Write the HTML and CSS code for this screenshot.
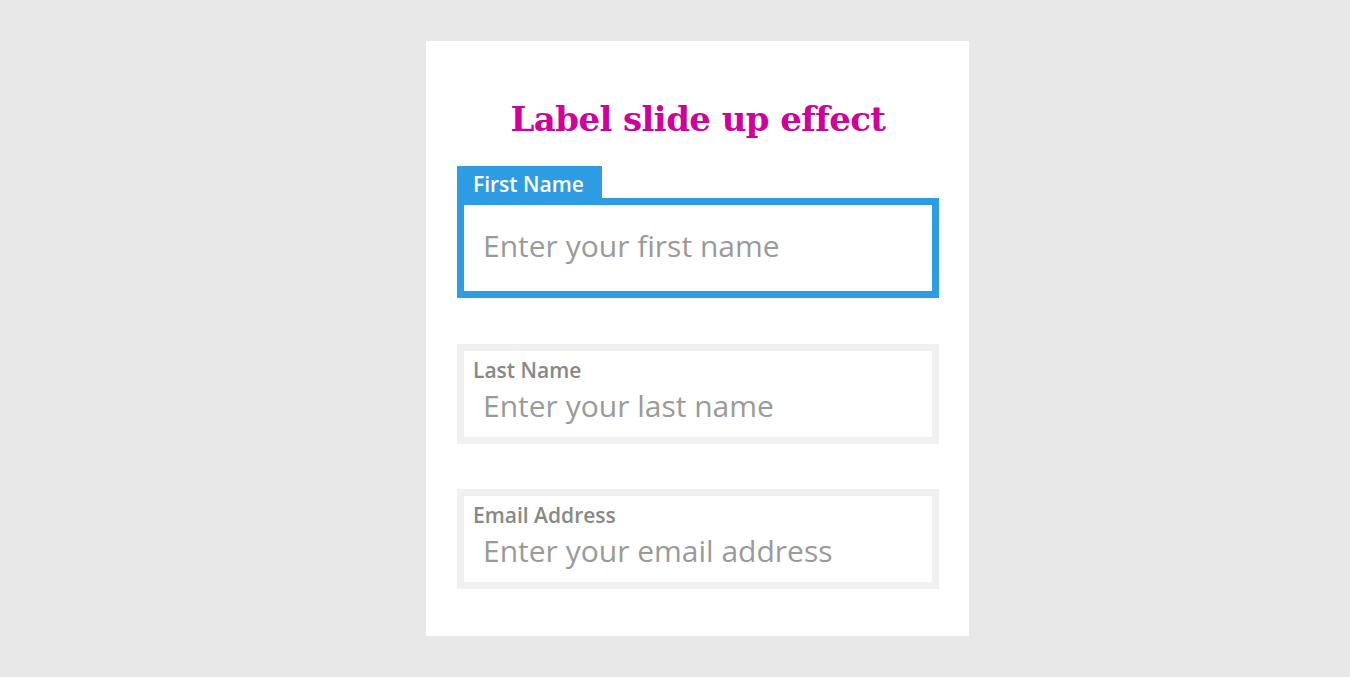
FILE: index.html
```html
<!DOCTYPE html>
<html lang="en">
<head>
<meta charset="utf-8">
<title>Label slide up effect</title>
<link rel="stylesheet" href="styles.css">
</head>
<body>
<main class="card">
  <h1 class="title">Label slide up effect</h1>
  <form class="form">
    <div class="field is-focused">
      <label class="tab" for="first">First Name</label>
      <div class="box">
        <input class="input" id="first" type="text" placeholder="Enter your first name">
      </div>
    </div>
    <div class="field">
      <div class="box">
        <label class="inline-label" for="last">Last Name</label>
        <input class="input" id="last" type="text" placeholder="Enter your last name">
      </div>
    </div>
    <div class="field">
      <div class="box">
        <label class="inline-label" for="email">Email Address</label>
        <input class="input" id="email" type="email" placeholder="Enter your email address">
      </div>
    </div>
  </form>
</main>
</body>
</html>
```

FILE: styles.css
```css
* { box-sizing: border-box; }

html, body {
  margin: 0;
  padding: 0;
}

body {
  background: #e8e8e8;
  font-family: "Open Sans", "Noto Sans", sans-serif;
  display: flex;
  justify-content: center;
  padding-top: 41px;
  padding-left: 45px;
}

.card {
  width: 543px;
  height: 595px;
  background: #ffffff;
  padding: 58px 30px 0 31px;
}

.title {
  margin: 0;
  text-align: center;
  font-family: "DejaVu Serif", "Liberation Serif", serif;
  font-weight: bold;
  font-size: 34px;
  letter-spacing: -0.6px;
  line-height: 40px;
  color: #d0009a;
}

.form {
  margin-top: 27px;
}

.field + .field {
  margin-top: 45.5px;
}

.tab {
  display: inline-block;
  height: 32px;
  padding: 4px 18px 0 16px;
  line-height: 28px;
  font-size: 21px;
  font-weight: 600;
  color: #ffffff;
  background: #2e9ce3;
  vertical-align: top;
}

.box {
  height: 100px;
  border: 7px solid #f0f0f0;
  background: #ffffff;
}

.is-focused .box {
  border-color: #2e9ce3;
}

.inline-label {
  display: block;
  margin-top: 6px;
  padding-left: 9px;
  font-size: 21px;
  font-weight: 600;
  line-height: 26px;
  color: #888888;
}

.input {
  display: block;
  width: 100%;
  margin: 5px 0 0 0;
  padding: 0 0 0 19px;
  border: 0;
  outline: none;
  background: transparent;
  font-family: "Open Sans", "Noto Sans", sans-serif;
  font-size: 30px;
  line-height: 36px;
  height: 36px;
  color: #555555;
}

.is-focused .input {
  margin: 0;
  height: 82px;
  line-height: 82px;
}

.input::placeholder {
  color: #9a9a9a;
  opacity: 1;
}
```
